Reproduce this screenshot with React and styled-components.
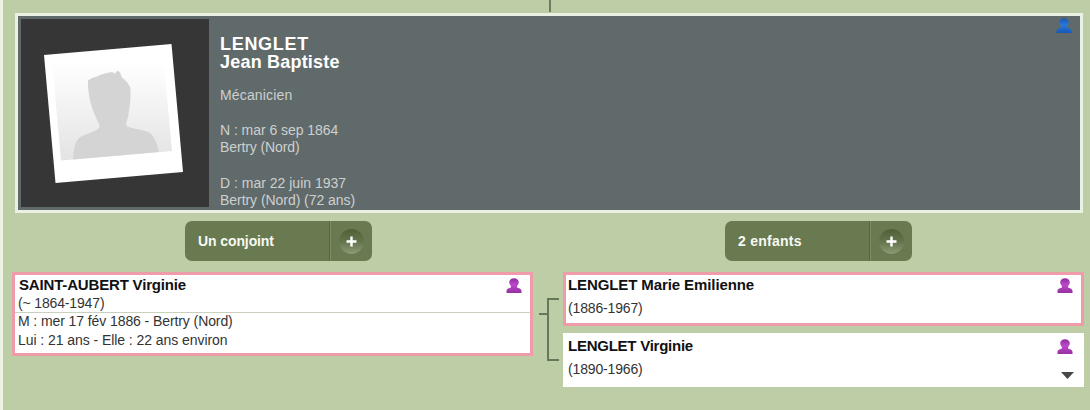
import styled, { createGlobalStyle } from 'styled-components';

const GlobalStyle = createGlobalStyle`
  body {
    margin: 0;
    background: #bdcea6;
    font-family: 'Liberation Sans', Arial, sans-serif;
  }
`;

const Page = styled.main`
  box-sizing: border-box;
  width: 1090px;
  height: 410px;
  padding-left: 12px;
  overflow: hidden;
  background: #bdcea6;
  border-left: 3px solid #edf2e4;
`;

const ParentLink = styled.div`
  width: 2px;
  height: 12px;
  margin: 0 0 1px 534px;
  background: #6d7a66;
`;

const MainCard = styled.section`
  box-sizing: border-box;
  display: flex;
  width: 1068px;
  height: 200px;
  padding: 3px;
  border: 3px solid #eaf0e2;
  background: #616a6b;
`;

const Photo = styled.svg`
  display: block;
  flex: none;
  width: 188px;
  height: 188px;
`;

const Identity = styled.div`
  flex: 1;
  padding: 17px 0 0 11px;
`;

const Name = styled.h1`
  margin: 0 0 15.5px;
  color: #fff;
  font-size: 18px;
  line-height: 17.6px;
`;

const Line = styled.div`
  color: #ccd0cf;
  font-size: 14px;
  line-height: 17.6px;
  min-height: 17.6px;
  white-space: nowrap;
`;

const Text = styled.span`
  letter-spacing: ${({ $spacing }) => $spacing || 0}px;
`;

const CardSide = styled.div`
  margin-top: -1px;
  padding-right: 5px;
`;

const Icon = styled.svg`
  display: block;
  flex: none;
  width: 16px;
  height: 15px;
`;

const Actions = styled.div`
  display: grid;
  grid-template-columns: 540px 1fr;
  padding: 8px 0 0 170px;
`;

const Pill = styled.div`
  display: flex;
  width: 187px;
  height: 40px;
  border-radius: 7px;
  overflow: hidden;
  background: #697a51;
`;

const PillLabel = styled.div`
  flex: 1;
  padding-left: 13px;
  color: #f7f9f2;
  font-size: 14px;
  font-weight: 700;
  line-height: 40px;
  border-right: 1px solid #56663f;
`;

const PillButton = styled.div`
  display: flex;
  align-items: center;
  justify-content: center;
  width: 41px;
  border-left: 1px solid #7d8d65;
`;

const Round = styled.div`
  display: flex;
  align-items: center;
  justify-content: center;
  width: 25px;
  height: 25px;
  border-radius: 50%;
  background: linear-gradient(#4f6038, #64754c 50%, #8b9b76);
`;

const Family = styled.div`
  display: flex;
  align-items: flex-start;
  margin: 11px 0 0 -3px;
`;

const Box = styled.article`
  box-sizing: border-box;
  display: flex;
  flex-direction: column;
  width: ${({ $width }) => $width}px;
  height: ${({ $height }) => $height}px;
  background: #fff;
  border: 3px solid ${({ $linked }) => ($linked ? '#ee9ca9' : '#fff')};
`;

const BoxHead = styled.div`
  display: flex;
  justify-content: space-between;
  height: 18px;
  padding: ${({ $child }) => ($child ? '1px 8px 0 2px' : '1px 8px 0 4px')};
`;

const BoxName = styled.div`
  color: #111;
  font-size: 15px;
  font-weight: 700;
  line-height: 18px;
  white-space: nowrap;
`;

const BoxIcon = styled.div`
  padding-top: 2px;
`;

const Detail = styled.div`
  display: flex;
  justify-content: space-between;
  padding: 0 7px 0 ${({ $left }) => $left || 2}px;
  color: #333;
  font-size: 14px;
  line-height: ${({ $height }) => $height || 19}px;
  margin-top: ${({ $top }) => $top || 0}px;
  white-space: nowrap;
`;

const Union = styled.div`
  border-top: 1px solid #c9d0be;
`;

const Bracket = styled.svg`
  flex: none;
  width: 30px;
  height: 115px;
`;

const Children = styled.div`
  display: flex;
  flex-direction: column;
  gap: 7px;
`;

const Arrow = styled.svg`
  width: 13px;
  height: 7px;
  margin-top: 13px;
`;

function Person({ blue }) {
  const id = blue ? 'man' : 'woman';
  return (
    <Icon viewBox="0 0 16 15">
      <defs>
        <linearGradient id={id} x1="0" y1="0" x2="0" y2="1">
          <stop offset="0" stopColor={blue ? '#1b55ad' : '#8c2f9b'} />
          <stop offset="0.45" stopColor={blue ? '#2a78da' : '#bd48cb'} />
          <stop offset="1" stopColor={blue ? '#1658b4' : '#96309f'} />
        </linearGradient>
      </defs>
      <path
        d="M8 0.200C11 0.200 12.800 2 12.800 4.500C12.800 6.500 10.900 7.500 10.900 9C10.900 10.200 15.500 9.900 15.500 13V14.900H0.500V13C0.500 9.900 5.100 10.200 5.100 9C5.100 7.500 3.200 6.500 3.200 4.500C3.200 2 5 0.200 8 0.200Z"
        fill={`url(#${id})`}
      />
    </Icon>
  );
}

function Portrait() {
  return (
    <Photo viewBox="21 19 188 188">
      <defs>
        <linearGradient id="paper" x1="0" y1="0" x2="0" y2="1">
          <stop offset="0.1" stopColor="#fff" />
          <stop offset="1" stopColor="#e3e3e3" />
        </linearGradient>
      </defs>
      <rect x="21" y="19" width="188" height="188" fill="#363636" />
      <path d="M44 55 171.500 44 183 172 55.500 183z" fill="#fff" />
      <path d="M52 62 163 52 172 151 61 160.500z" fill="url(#paper)" />
      <path
        d="M73 159.500C73.500 150 75 142 79 138C86 133 96 132 99 128C101 125 97 121 94 113C90 103 87.500 90 88 80.500L92 78L97 76.500L101 74.500L107 73L112 72L115 73.500L117.500 70.500L120 72.500L122 77.500C126 81 129 84 130.500 88C131 98 129.500 108 128 117C127.500 120 125.500 123 126.500 126C131 129 144 129 150 133C155 137 157 144 159 152Z"
        fill="#d4d4d4"
      />
    </Photo>
  );
}

function ActionPill({ label, spacing }) {
  return (
    <Pill>
      <PillLabel>
        <Text $spacing={spacing}>{label}</Text>
      </PillLabel>
      <PillButton>
        <Round>
          <svg width="11" height="11" viewBox="0 0 11 11">
            <path d="M5.500 0.500v10M0.500 5.500h10" stroke="#fff" strokeWidth="2.400" />
          </svg>
        </Round>
      </PillButton>
    </Pill>
  );
}

function Child({ name, spacing, years, linked, more }) {
  return (
    <Box $width={521} $height={54} $linked={linked}>
      <BoxHead $child>
        <BoxName>
          <Text $spacing={spacing}>{name}</Text>
        </BoxName>
        <BoxIcon>
          <Person />
        </BoxIcon>
      </BoxHead>
      <Detail $top={4} $height={20}>
        <Text $spacing={-0.15}>{years}</Text>
        {more && (
          <Arrow viewBox="0 0 13 7">
            <path d="M0 0h13L6.500 7z" fill="#484848" />
          </Arrow>
        )}
      </Detail>
    </Box>
  );
}

function App() {
  return (
    <>
      <GlobalStyle />
      <Page>
        <ParentLink />
        <MainCard>
          <Portrait />
          <Identity>
            <Name>
              <Text $spacing={0.7}>LENGLET</Text>
              <br />
              <Text $spacing={0.2}>Jean Baptiste</Text>
            </Name>
            <Line>
              <Text $spacing={0.15}>Mécanicien</Text>
            </Line>
            <Line />
            <Line>
              <Text $spacing={-0.05}>N : mar 6 sep 1864</Text>
            </Line>
            <Line>
              <Text $spacing={-0.1}>Bertry (Nord)</Text>
            </Line>
            <Line />
            <Line>D : mar 22 juin 1937</Line>
            <Line>
              <Text $spacing={-0.05}>Bertry (Nord) (72 ans)</Text>
            </Line>
          </Identity>
          <CardSide>
            <Person blue />
          </CardSide>
        </MainCard>
        <Actions>
          <ActionPill label="Un conjoint" spacing={-0.1} />
          <ActionPill label="2 enfants" spacing={0.25} />
        </Actions>
        <Family>
          <Box $width={521} $height={84} $linked>
            <BoxHead>
              <BoxName>
                <Text $spacing={-0.17}>SAINT-AUBERT Virginie</Text>
              </BoxName>
              <BoxIcon>
                <Person />
              </BoxIcon>
            </BoxHead>
            <Detail $left={3} $height={18}>
              <Text $spacing={-0.15}>(~ 1864-1947)</Text>
            </Detail>
            <Union>
              <Detail $left={3} $height={17}>
                <Text $spacing={-0.09}>M : mer 17 fév 1886 - Bertry (Nord)</Text>
              </Detail>
              <Detail $left={3} $height={20}>
                <Text $spacing={-0.06}>Lui : 21 ans - Elle : 22 ans environ</Text>
              </Detail>
            </Union>
          </Box>
          <Bracket viewBox="533 272 30 115">
            <path d="M539 314h9M559 299h-11v61h11" fill="none" stroke="#66775c" strokeWidth="2" />
          </Bracket>
          <Children>
            <Child name="LENGLET Marie Emilienne" spacing={-0.1} years="(1886-1967)" linked />
            <Child name="LENGLET Virginie" spacing={-0.25} years="(1890-1966)" more />
          </Children>
        </Family>
      </Page>
    </>
  );
}

export default App;
